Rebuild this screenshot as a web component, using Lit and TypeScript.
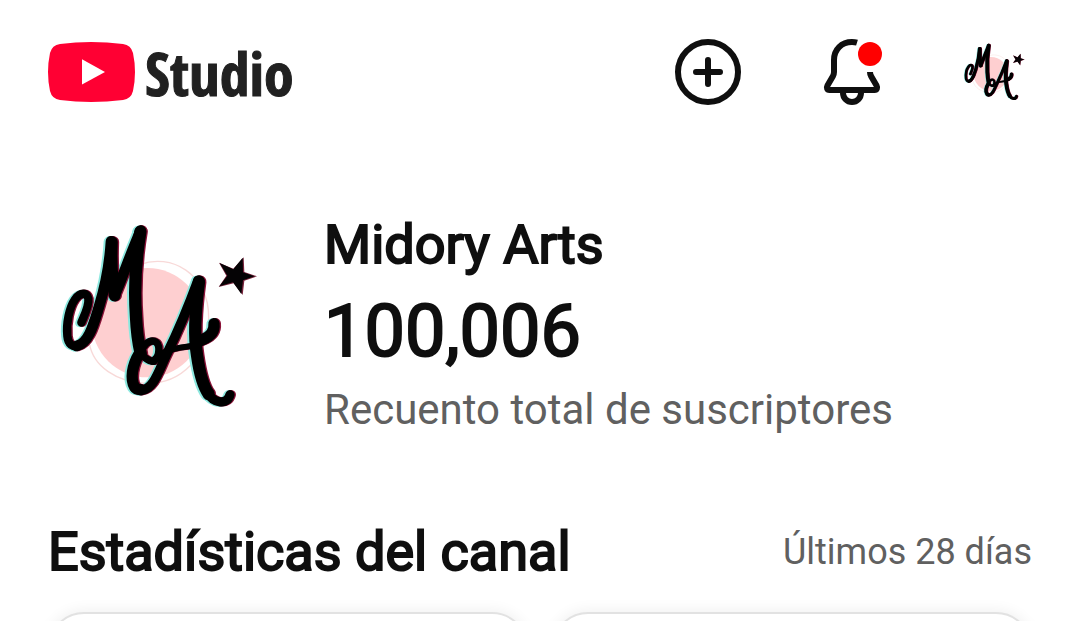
import { LitElement, html, svg, css } from "lit";
import { customElement, property } from "lit/decorators.js";

const monogramStrokes = () => svg`
  <path stroke-width="25" d="M124 338C132 318 148 288 145 266C142 246 120 246 105 268C88 292 78 340 82 378C84 402 98 414 117 406C136 398 150 372 160 335"/>
  <path stroke-width="32" d="M110 408C148 400 163 335 177 290C197 225 209 160 213 94"/>
  <path stroke-width="35" d="M216 96C214 150 215 205 224 257"/>
  <path stroke-width="32" d="M224 257C250 195 274 125 302 62"/>
  <path stroke-width="37" d="M301 65C287 150 282 235 288 320C290 365 294 396 302 430"/>
  <path stroke-width="22" d="M294 410C308 444 324 454 342 454C360 438 362 401 344 394C326 388 308 408 300 430"/>
  <path stroke-width="34" d="M298 430C276 466 270 508 284 531C288 537 294 538 300 538"/>
  <path stroke-width="29" d="M302 542C342 538 356 482 381 431C413 366 445 290 474 211"/>
  <path stroke-width="37" d="M477 215C467 290 460 370 471 435C479 492 490 530 506 552"/>
  <path stroke-width="28" d="M500 546C522 582 562 586 570 554"/>
  <path stroke-width="18" d="M337 455C355 426 395 415 440 410C477 407 500 394 514 378"/>
  <path stroke-width="34" d="M490 388C514 378 524 361 522 341"/>
`;

@customElement("channel-avatar")
export class ChannelAvatar extends LitElement {
  @property() label = "";

  static styles = css`
    :host { display: block; }
    svg { display: block; width: 100%; height: auto; }
  `;

  render() {
    return html`
      <svg viewBox="24 0 696 630" role="img" aria-label=${this.label}>
        <ellipse cx="322" cy="338" rx="166" ry="164" fill="#fecfd0" />
        <path d="M300 164C390 128 508 190 506 324C504 440 424 522 318 520C230 516 160 470 148 400" fill="none" stroke="#f8d9d8" stroke-width="4" />
        <g fill="none" stroke-linecap="round" stroke-linejoin="round">
          <g stroke="#8ce8df" transform="translate(-6 1)">${monogramStrokes()}</g>
          <g stroke="#8a1238" transform="translate(4 0)">${monogramStrokes()}</g>
          <g stroke="#000">${monogramStrokes()}</g>
        </g>
        <path d="M611 142L613 186L651 199L613 212L608 255L581 220L536 231L559 197L537 158L580 176Z" fill="#78233c" />
        <path d="M608 143L609 187L644 199L609 211L604 252L579 217L538 229L562 197L539 159L580 178Z" fill="#050305" />
      </svg>
    `;
  }
}

@customElement("app-root")
export class AppRoot extends LitElement {
  static styles = css`
    :host {
      display: block;
      height: 100vh;
      overflow: hidden;
      background: #fff;
      color: #0f0f0f;
      font-family: Roboto, "Noto Sans", sans-serif;
    }
    * { box-sizing: border-box; }
    h1, h2, p { margin: 0; font-weight: 400; }
    svg { display: block; }
    .top {
      display: flex;
      align-items: center;
      justify-content: space-between;
      height: 144px;
      padding: 0 48px;
    }
    .brand {
      display: flex;
      align-items: center;
      gap: 10px;
      color: #212121;
      text-decoration: none;
      font: bold 60px/72px "Open Sans Condensed", "Liberation Sans Narrow", "Liberation Sans", sans-serif;
      -webkit-text-stroke: 1px currentColor;
    }
    .wordmark { padding-top: 2px; }
    .actions { display: flex; gap: 72px; }
    .action {
      width: 72px;
      height: 72px;
      padding: 0;
      border: 0;
      background: none;
      color: inherit;
      display: grid;
      place-items: center;
    }
    .action channel-avatar { width: 72px; }
    .channel {
      display: flex;
      align-items: flex-start;
      gap: 44px;
      padding: 66px 48px 0;
    }
    .portrait { width: 232px; flex: none; }
    .name, .count, .stats-title { -webkit-text-stroke: 2px currentColor; }
    .name { font-size: 54px; line-height: 70px; }
    .count { font-size: 72px; line-height: 104px; }
    .caption { font-size: 42px; line-height: 52px; color: #606060; }
    .stats-head {
      display: flex;
      align-items: center;
      justify-content: space-between;
      padding: 80px 48px 0;
    }
    .stats-title { font-size: 54px; line-height: 72px; }
    .period { font-size: 36px; line-height: 72px; color: #606060; }
    .cards {
      display: grid;
      grid-template-columns: 1fr 1fr;
      gap: 24px;
      padding: 24px 48px 48px;
    }
    .card {
      height: 240px;
      border: 2px solid #e2e2e2;
      border-radius: 36px;
      background: #fff;
      box-shadow: 0 0 14px 2px rgba(0, 0, 0, 0.06);
    }
  `;

  render() {
    return html`
      <header class="top">
        <a class="brand" href="#">
          <svg width="87" height="60" viewBox="0 0 87 60" aria-hidden="true">
            <path d="M12 2Q43 -2 75 2Q83 3 85 11Q89 30 85 49Q83 57 75 58Q43 62 12 58Q4 57 2 49Q-2 30 2 11Q4 3 12 2Z" fill="#ff0033" />
            <path d="M34 17.3L57 30L34 42.6Z" fill="#fff" />
          </svg>
          <span class="wordmark">Studio</span>
        </a>
        <div class="actions">
          <button class="action" aria-label="Crear">
            <svg width="72" height="72" viewBox="0 0 72 72" fill="none" stroke="#0f0f0f" stroke-width="6" stroke-linecap="round">
              <circle cx="36" cy="36" r="30" />
              <path d="M36 24V48M24 36H48" />
            </svg>
          </button>
          <button class="action" aria-label="Notificaciones">
            <svg width="72" height="72" viewBox="0 0 72 72" fill="none" stroke="#0f0f0f" stroke-width="6">
              <path d="M41 6.7C39.4 6.2 37.7 6 36 6C25.5 6 18 13.5 18 24V36Q18 38 17 40L11.5 49.5C10.3 51.8 11 54 13.5 54H58.5C61 54 61.7 51.8 60.5 49.5L55 40Q54 38 54 36" />
              <path d="M27 54V57A9 9 0 0 0 45 57V54" />
              <circle cx="54" cy="18" r="12" fill="#f00" stroke="none" />
            </svg>
          </button>
          <button class="action" aria-label="Cuenta">
            <channel-avatar label="Midory Arts"></channel-avatar>
          </button>
        </div>
      </header>
      <main>
        <section class="channel">
          <channel-avatar class="portrait" label="Midory Arts"></channel-avatar>
          <div>
            <h1 class="name">Midory Arts</h1>
            <p class="count">100,006</p>
            <p class="caption">Recuento total de suscriptores</p>
          </div>
        </section>
        <section>
          <div class="stats-head">
            <h2 class="stats-title">Estadísticas del canal</h2>
            <p class="period">Últimos 28 días</p>
          </div>
          <div class="cards">
            <div class="card"></div>
            <div class="card"></div>
          </div>
        </section>
      </main>
    `;
  }
}
